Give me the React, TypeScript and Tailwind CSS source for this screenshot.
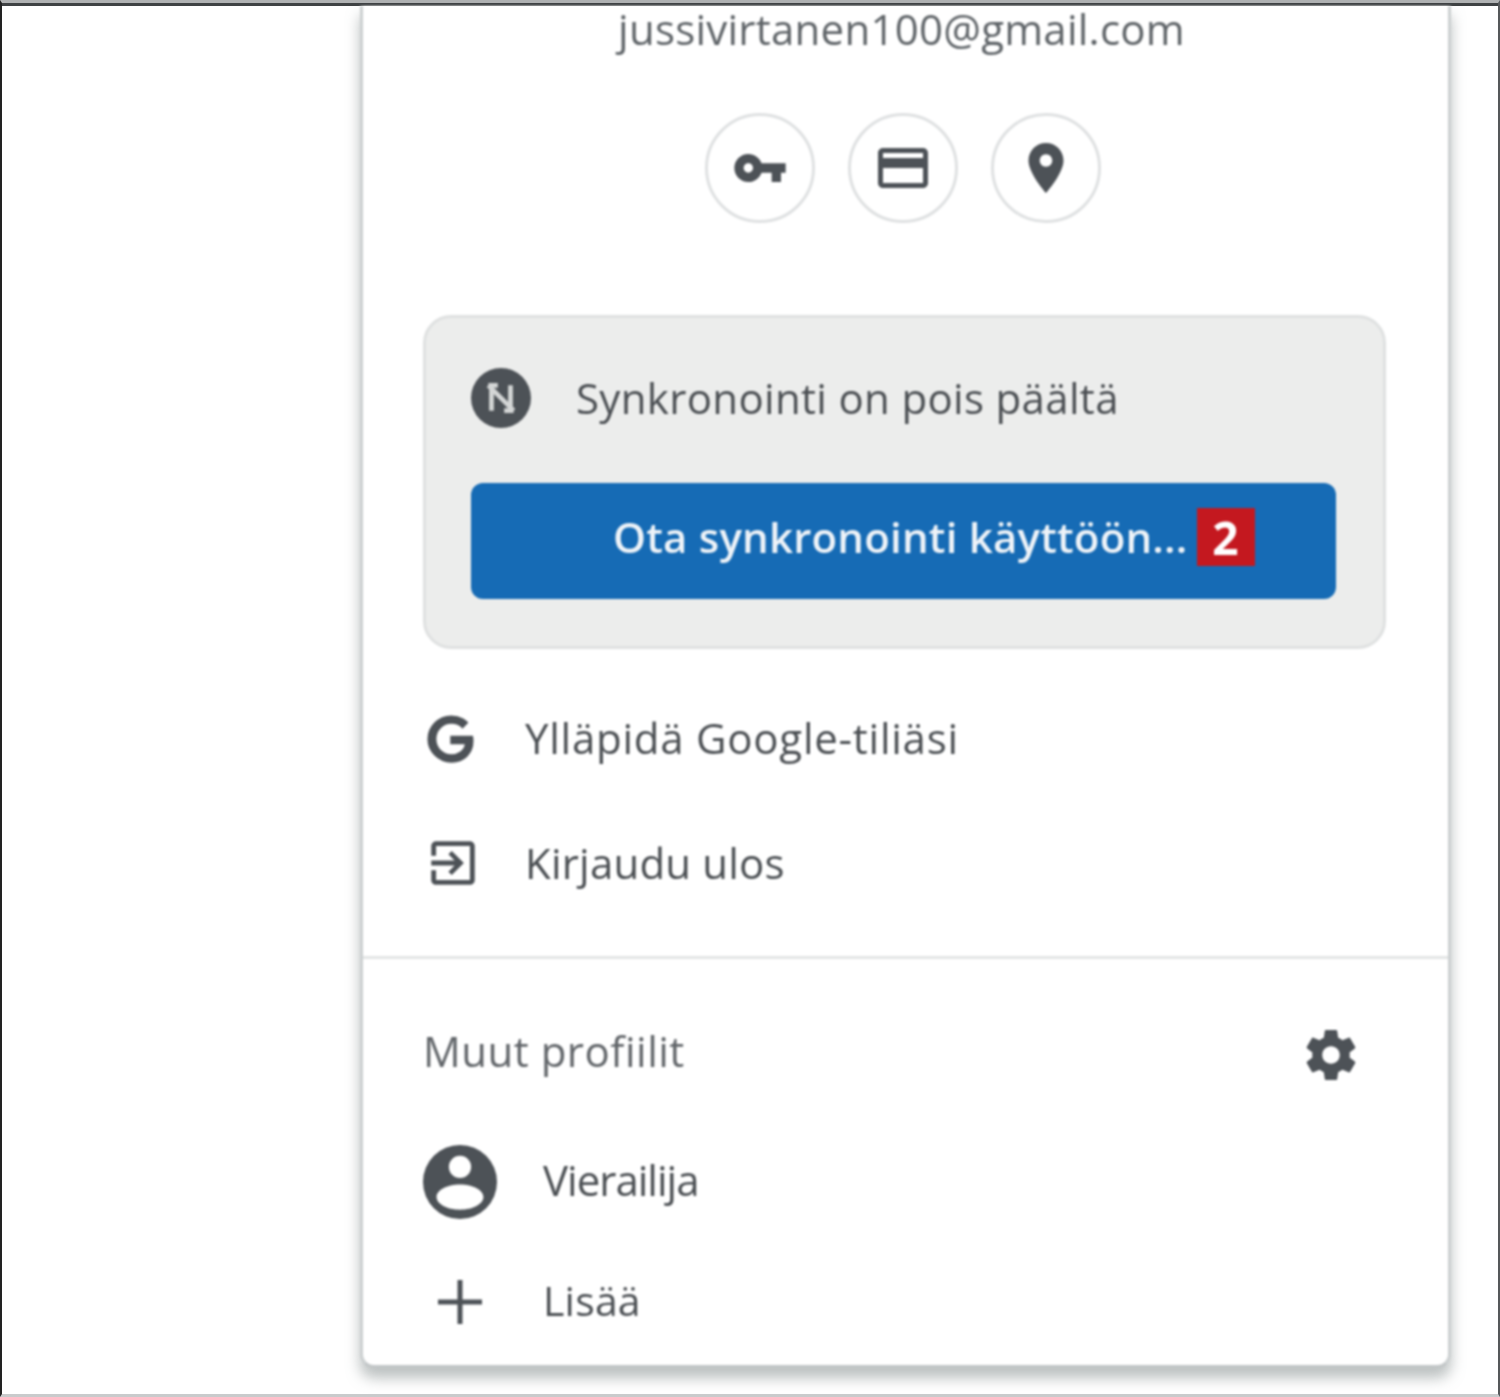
const iconColor = '#4d5257';

function Icon({ d, className }: { d: string; className: string }) {
  return (
    <svg viewBox="0 0 24 24" className={className} fill={iconColor} fillRule="evenodd">
      <path d={d} />
    </svg>
  );
}

const paths = {
  key: 'M12.65 10C11.83 7.67 9.61 6 7 6c-3.31 0-6 2.69-6 6s2.69 6 6 6c2.61 0 4.83-1.67 5.65-4H17v4h4v-4h2v-4H12.65zM7 14c-1.1 0-2-.9-2-2s.9-2 2-2 2 .9 2 2-.9 2-2 2z',
  card: 'M20 4H4c-1.11 0-1.99.89-1.99 2L2 18c0 1.11.89 2 2 2h16c1.11 0 2-.89 2-2V6c0-1.11-.89-2-2-2zm0 14H4v-6h16v6zm0-10H4V6h16v2z',
  pin: 'M12 2C8.13 2 5 5.13 5 9c0 5.25 7 13 7 13s7-7.75 7-13c0-3.87-3.13-7-7-7zm0 9.5c-1.38 0-2.5-1.12-2.5-2.5s1.12-2.5 2.5-2.5 2.5 1.12 2.5 2.5-1.12 2.5-2.5 2.5z',
  google:
    'M21.35 11.1h-9.17v2.73h6.51c-.33 3.81-3.5 5.44-6.5 5.44C8.36 19.27 5 16.25 5 12c0-4.1 3.2-7.27 7.2-7.27 3.09 0 4.9 1.97 4.9 1.97L19 4.72S16.56 2 12.1 2C6.42 2 2.03 6.8 2.03 12c0 5.05 4.13 10 10.22 10 5.35 0 9.25-3.67 9.25-9.09 0-1.15-.15-1.81-.15-1.81z',
  signin:
    'M10.09 15.59L11.5 17l5-5-5-5-1.41 1.41L12.67 11H3v2h9.67l-2.58 2.59zM19 3H5c-1.11 0-2 .9-2 2v4h2V5h14v14H5v-4H3v4c0 1.1.89 2 2 2h14c1.1 0 2-.89 2-2V5c0-1.1-.9-2-2-2z',
  gear: 'M19.43 12.98c.04-.32.07-.64.07-.98s-.03-.66-.07-.98l2.11-1.65c.19-.15.24-.42.12-.64l-2-3.46c-.12-.22-.39-.3-.61-.22l-2.49 1c-.52-.4-1.08-.73-1.69-.98l-.38-2.65C14.46 2.18 14.25 2 14 2h-4c-.25 0-.46.18-.49.42l-.38 2.65c-.61.25-1.17.59-1.69.98l-2.49-1c-.23-.09-.49 0-.61.22l-2 3.46c-.13.22-.07.49.12.64l2.11 1.65c-.04.32-.07.65-.07.98s.03.66.07.98l-2.11 1.65c-.19.15-.24.42-.12.64l2 3.46c.12.22.39.3.61.22l2.49-1c.52.4 1.08.73 1.69.98l.38 2.65c.03.24.24.42.49.42h4c.25 0 .46-.18.49-.42l.38-2.65c.61-.25 1.17-.59 1.69-.98l2.49 1c.23.09.49 0 .61-.22l2-3.46c.12-.22.07-.49-.12-.64l-2.11-1.65zM12 15.5c-1.93 0-3.5-1.57-3.5-3.5s1.57-3.5 3.5-3.5 3.5 1.57 3.5 3.5-1.57 3.5-3.5 3.5z',
};

function RoundButton({ d, size }: { d: string; size: string }) {
  return (
    <div className="flex h-[110px] w-[110px] items-center justify-center rounded-full border-[3px] border-[#dfe1e2]">
      <Icon d={d} className={size} />
    </div>
  );
}

export default function App() {
  return (
    <div
      className="h-[1397px] w-[1500px] border-t-[3px] border-r-[2px] border-b-[3px] border-l-[2px] border-t-[#b0b2b3] border-r-[#55585a] border-b-[#c9cbcc] border-l-[#222] bg-white text-[#4b4f53]"
      style={{ fontFamily: '"Open Sans", "Noto Sans", sans-serif' }}
    >
      <div className="h-[1391px] border-t-[3px] border-[#3f4244] pl-[358px]">
        <div className="h-[1362px] w-[1091px] rounded-b-[14px] border-x-[3px] border-b-[3px] border-x-[#ccd0d1] border-b-[#c2c6c7] bg-white shadow-[0_10px_14px_rgba(120,130,130,0.5)] blur-[1px]">
          <div className="flex h-[45px] items-center justify-center pr-[8px] text-[42px] leading-none tracking-[0.25px] text-[#5f6468]">
            jussivirtanen100@gmail.com
          </div>

          <div className="mt-[62px] flex justify-center gap-[33px] pr-[5px]">
            <RoundButton d={paths.key} size="h-[56px] w-[56px]" />
            <RoundButton d={paths.card} size="h-[60px] w-[60px]" />
            <RoundButton d={paths.pin} size="h-[60px] w-[60px]" />
          </div>

          <div className="ml-[60px] mt-[92px] h-[334px] w-[963px] rounded-[28px] border-[3px] border-[#dfe1e1] bg-[#ecedec] px-[45px]">
            <div className="flex h-[165px] items-center pb-[5px]">
              <div className="flex h-[60px] w-[60px] items-center justify-center rounded-full bg-[#4d5257]">
                <svg viewBox="0 0 24 24" className="h-[38px] w-[38px]" fill="none" stroke="#d4d6d6" strokeWidth="3">
                  <path d="M6 4v16M18 4v16M4 4l16 16M10 4H4M20 20h-6" />
                </svg>
              </div>
              <span className="ml-[45px] text-[42px] leading-none tracking-[0.33px] text-[#4b4f53]">
                Synkronointi on pois päältä
              </span>
            </div>
            <div className="flex h-[116px] w-[865px] items-center rounded-[12px] bg-[#166bb5] pb-[8px] pl-[142px]">
              <span className="text-[42px] font-semibold leading-none tracking-[0.2px] text-[#eef3f8]">
                Ota synkronointi käyttöön...
              </span>
              <span className="ml-[9px] flex h-[58px] w-[58px] items-center justify-center bg-[#c4181f] text-[46px] font-bold leading-none text-white">
                2
              </span>
            </div>
          </div>

          <div className="ml-[61px] mt-[28px] flex h-[124px] items-center">
            <Icon d={paths.google} className="h-[54px] w-[54px] stroke-[#4d5257] stroke-[1px]" />
            <span className="ml-[47px] pb-[2px] text-[42px] leading-none tracking-[0.75px]">Ylläpidä Google-tiliäsi</span>
          </div>
          <div className="ml-[61px] flex h-[124px] items-center">
            <Icon d={paths.signin} className="h-[58px] w-[58px]" />
            <span className="ml-[43px] text-[42px] leading-none tracking-[0.2px]">Kirjaudu ulos</span>
          </div>

          <div className="mt-[31px] border-t-[3px] border-[#e3e5e5]" />

          <div className="ml-[60px] mr-[87px] mt-[63px] flex h-[66px] items-center justify-between">
            <span className="pb-[8px] text-[42px] leading-none tracking-[0.5px] text-[#62666a]">Muut profiilit</span>
            <Icon d={paths.gear} className="h-[60px] w-[60px]" />
          </div>

          <div className="ml-[60px] mt-[49px] flex h-[90px] items-center">
            <svg viewBox="0 0 24 24" className="h-[74px] w-[74px]" fill={iconColor} fillRule="evenodd">
              <path d="M12 0a12 12 0 1 0 0 24a12 12 0 1 0 0-24zM12 3.5a3.6 3.6 0 1 0 0 7.2a3.6 3.6 0 1 0 0-7.2zM12 12.8c-4.2 0-7.6 1.8-7.6 4.1S7.8 21 12 21s7.6-1.8 7.6-4.1S16.2 12.8 12 12.8z" />
            </svg>
            <span className="ml-[46px] pb-[4px] text-[42px] leading-none tracking-[-1px]">Vierailija</span>
          </div>
          <div className="ml-[60px] mt-[30px] flex h-[90px] items-center">
            <div className="flex w-[74px] justify-center">
              <svg viewBox="0 0 44 44" className="h-[44px] w-[44px]" stroke={iconColor} strokeWidth="5">
                <path d="M22 0v44M0 22h44" />
              </svg>
            </div>
            <span className="ml-[46px] pb-[4px] text-[41px] leading-none tracking-[0.2px]">Lisää</span>
          </div>
        </div>
      </div>
    </div>
  );
}
